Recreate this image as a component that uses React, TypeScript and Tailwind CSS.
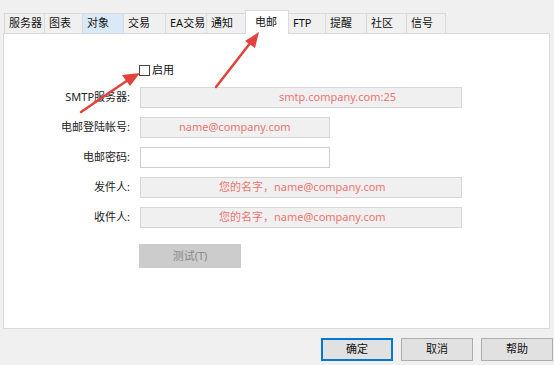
import React from "react";

const tabs = ["服务器", "图表", "对象", "交易", "EA交易", "通知", "电邮", "FTP", "提醒", "社区", "信号"];
// border-to-border widths measured from the screenshot
const tabWidths = [41, 38, 41, 42, 41, 39, 43, 37, 41, 40, 39];

const FONT = { fontFamily: '"Noto Sans", "Noto Sans CJK SC", sans-serif' };

function Field({ label, value, width, pad = "", gray = true }: { label: string; value?: string; width: string; pad?: string; gray?: boolean }) {
  return (
    <div className="flex items-center h-[21px]">
      <div className="w-[128px] pr-[2px] text-right text-[11px] text-[#222] whitespace-nowrap">{label}</div>
      <div className="w-[8px]" />
      <div
        className={`${width} ${pad} h-[21px] border flex items-center text-[11px] text-[#ec7472] whitespace-nowrap ${
          gray ? "bg-[#f0f0f0] border-[#d6d6d6]" : "bg-white border-[#cfcfcf]"
        }`}
      >
        {value}
      </div>
    </div>
  );
}

export default function App() {
  return (
    <div className="relative w-[554px] h-[365px] bg-[#f0f0f0] overflow-hidden select-none" style={FONT}>
      {/* tab strip */}
      <div className="flex items-end h-[33px] pl-[4px]">
        {tabs.map((t, i) => {
          const active = t === "电邮";
          const hover = t === "对象";
          return (
            <div
              key={t}
              style={{ width: active ? tabWidths[i] + 1 : tabWidths[i] }}
              className={`flex text-[11px] text-[#111] whitespace-nowrap border-[#d9d9d9] ${
                active
                  ? "h-[24px] bg-white border-t border-l border-r relative z-10 -mb-px -ml-px pl-[9px] items-start pt-[3px]"
                  : `h-[20px] items-center border-t border-r pl-[4px] ${hover ? "bg-[#d9e9f7]" : "bg-[#f0f0f0]"} ${i === 0 ? "border-l" : ""}`
              }`}
            >
              {t}
            </div>
          );
        })}
      </div>

      {/* panel */}
      <div className="ml-[3px] w-[547px] h-[296px] bg-white border border-[#d9d9d9]">
        <div className="pt-[29px]">
          <div className="flex items-center h-[14px] pl-[135px]">
            <div className="w-[11px] h-[11px] border border-[#444] bg-white" />
            <span className="ml-[2px] text-[11px] text-[#111]">启用</span>
          </div>
          <div className="mt-[10px] flex flex-col gap-[9px]">
            <Field label="SMTP服务器:" value="smtp.company.com:25" width="w-[322px]" pad="pl-[138px]" />
            <Field label="电邮登陆帐号:" value="name@company.com" width="w-[190px]" pad="pl-[38px]" />
            <Field label="电邮密码:" width="w-[190px]" gray={false} />
            <Field label="发件人:" value="您的名字，name@company.com" width="w-[322px]" pad="pl-[78px]" />
            <Field label="收件人:" value="您的名字，name@company.com" width="w-[322px]" pad="pl-[78px]" />
          </div>
          <div className="mt-[16px] ml-[135px] w-[102px] h-[24px] bg-[#cccccc] flex items-center justify-center text-[11px] text-[#8a8a8a]">
            测试(T)
          </div>
        </div>
      </div>

      {/* dialog buttons */}
      <div className="flex gap-[8px] ml-[321px] mt-[9px]">
        <button className="w-[72px] h-[23px] bg-[#e1e1e1] border border-[#0078d7] shadow-[inset_0_0_0_1px_#0078d7] text-[11px] text-[#111]">
          确定
        </button>
        <button className="w-[72px] h-[23px] bg-[#e1e1e1] border border-[#adadad] text-[11px] text-[#111]">
          取消
        </button>
        <button className="w-[72px] h-[23px] bg-[#e1e1e1] border border-[#adadad] text-[11px] text-[#111]">
          帮助
        </button>
      </div>

      {/* red annotation arrows */}
      <svg className="absolute inset-0 pointer-events-none z-20" width="554" height="365">
        <line x1="81" y1="112" x2="128" y2="80" stroke="#e2423c" strokeWidth="2.5" strokeLinecap="round" />
        <polygon points="140,73 122,75 130,86" fill="#e2423c" />
        <line x1="216" y1="87" x2="251" y2="42" stroke="#e2423c" strokeWidth="2.5" strokeLinecap="round" />
        <polygon points="259,32 245,41 255,48" fill="#e2423c" />
      </svg>
    </div>
  );
}
